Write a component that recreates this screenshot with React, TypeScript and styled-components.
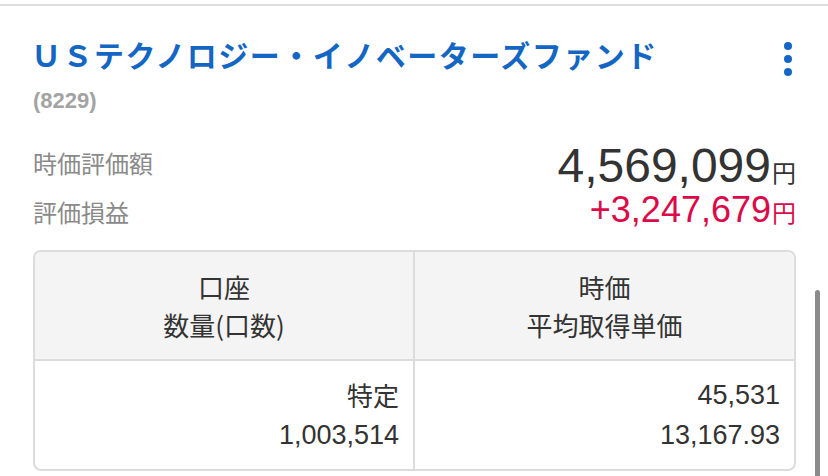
import React from "react";
import styled, { createGlobalStyle } from "styled-components";

const Global = createGlobalStyle`
  html, body { margin: 0; padding: 0; background: #ffffff; }
  body {
    font-family: "Liberation Sans", "Noto Sans CJK JP", sans-serif;
    overflow: hidden;
  }
`;

const Page = styled.div`
  position: relative;
  width: 828px;
  height: 476px;
  overflow: hidden;
  background: #fff;
`;

const TopRule = styled.div`
  margin-top: 4px;
  height: 2px;
  background: #dedede;
`;

const Card = styled.div`
  padding: 28px 32px 0 33px;
`;

const HeaderRow = styled.div`
  display: flex;
  justify-content: space-between;
  align-items: flex-start;
`;

const Title = styled.h1`
  margin: 0 0 0 -2px;
  font-family: "Noto Sans CJK JP", sans-serif;
  font-size: 30px;
  font-weight: 700;
  letter-spacing: 1.5px;
  line-height: 40px;
  color: #1466c4;
`;

const Kebab = styled.div`
  display: flex;
  flex-direction: column;
  gap: 5px;
  margin: 8px 4px 0 0;
`;

const Dot = styled.span`
  width: 8px;
  height: 8px;
  border-radius: 50%;
  background: #1466c4;
`;

const Code = styled.div`
  margin-top: 12px;
  font-family: "Liberation Sans", sans-serif;
  font-size: 22px;
  font-weight: 700;
  color: #a3a3a3;
  line-height: 26px;
`;

const Summary = styled.div`
  margin-top: 31px;
  display: flex;
  flex-direction: column;
`;

const SummaryRow = styled.div<{ $gap: number }>`
  display: flex;
  justify-content: space-between;
  align-items: flex-start;
  margin-top: ${(p) => p.$gap}px;
`;

const Label = styled.div<{ $offset: number }>`
  margin-top: ${(p) => p.$offset}px;
  font-family: "Noto Sans CJK JP", sans-serif;
  font-size: 24px;
  color: #8a8a8a;
  line-height: 24px;
`;

const Amount = styled.div<{ $size: number; $color: string; $lh: number }>`
  text-align: right;
  font-size: ${(p) => p.$size}px;
  color: ${(p) => p.$color};
  line-height: ${(p) => p.$lh}px;
  white-space: nowrap;
`;

const Yen = styled.span`
  font-family: "Noto Sans CJK JP", sans-serif;
  font-size: 24px;
  margin-left: 1px;
`;

const Table = styled.div`
  margin-top: 20px;
  border: 2px solid #dcdcdc;
  border-radius: 8px;
  overflow: hidden;
  display: grid;
  grid-template-columns: 380px 1fr;
`;

const HeadCell = styled.div<{ $divider?: boolean }>`
  background: #f4f4f4;
  height: 107px;
  border-bottom: 2px solid #dcdcdc;
  border-right: ${(p) => (p.$divider ? "2px solid #dcdcdc" : "none")};
  display: flex;
  flex-direction: column;
  align-items: center;
  justify-content: center;
  gap: 4px;
  font-family: "Noto Sans CJK JP", sans-serif;
  font-size: 26px;
  color: #333;
  line-height: 34px;
`;

const BodyCell = styled.div<{ $divider?: boolean }>`
  height: 108px;
  border-right: ${(p) => (p.$divider ? "2px solid #dcdcdc" : "none")};
  display: flex;
  flex-direction: column;
  align-items: flex-end;
  justify-content: center;
  gap: 6px;
  padding-right: 14px;
  font-size: 27px;
  color: #333;
  line-height: 34px;
`;

const CjkText = styled.span`
  font-family: "Noto Sans CJK JP", sans-serif;
  font-size: 26px;
`;

const Scrollbar = styled.div`
  position: absolute;
  left: 815px;
  top: 290px;
  width: 5px;
  height: 200px;
  border-radius: 3px;
  background: #8b8b8b;
`;

export default function App() {
  return (
    <Page>
      <Global />
      <TopRule />
      <Card>
        <HeaderRow>
          <Title>ＵＳテクノロジー・イノベーターズファンド</Title>
          <Kebab>
            <Dot />
            <Dot />
            <Dot />
          </Kebab>
        </HeaderRow>
        <Code>(8229)</Code>
        <Summary>
          <SummaryRow $gap={0}>
            <Label $offset={6}>時価評価額</Label>
            <Amount $size={48} $lh={42} $color="#333333">
              4,569,099<Yen>円</Yen>
            </Amount>
          </SummaryRow>
          <SummaryRow $gap={-1}>
            <Label $offset={8}>評価損益</Label>
            <Amount $size={36} $lh={36} $color="#dc0a48">
              +3,247,679<Yen>円</Yen>
            </Amount>
          </SummaryRow>
        </Summary>
        <Table>
          <HeadCell $divider>
            <span>口座</span>
            <span>数量(口数)</span>
          </HeadCell>
          <HeadCell>
            <span>時価</span>
            <span>平均取得単価</span>
          </HeadCell>
          <BodyCell $divider>
            <CjkText>特定</CjkText>
            <span>1,003,514</span>
          </BodyCell>
          <BodyCell>
            <span>45,531</span>
            <span>13,167.93</span>
          </BodyCell>
        </Table>
      </Card>
      <Scrollbar />
    </Page>
  );
}
